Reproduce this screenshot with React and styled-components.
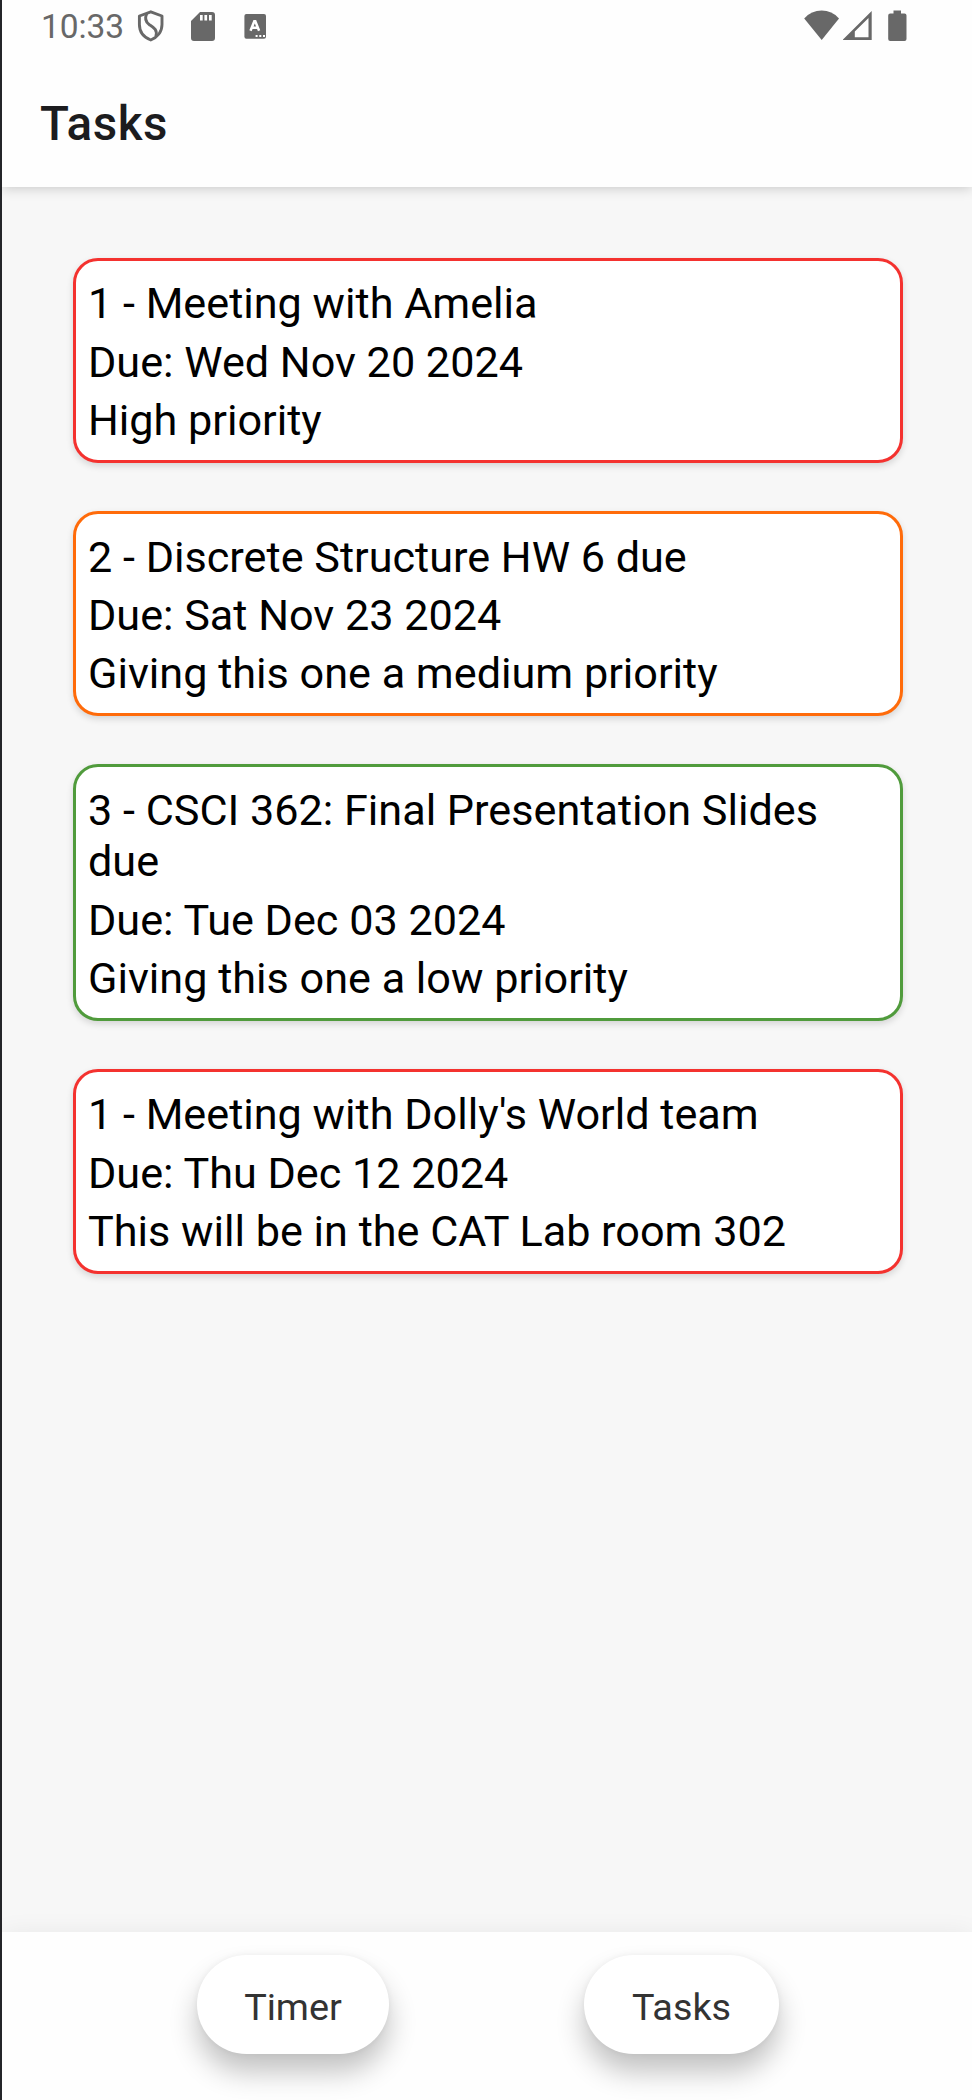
import React from "react";
import styled, { createGlobalStyle } from "styled-components";

const GlobalStyle = createGlobalStyle`
  * { box-sizing: border-box; }
  body { margin: 0; background: #f7f7f7; }
`;

const Screen = styled.div`
  width: 972px;
  height: 2100px;
  display: flex;
  flex-direction: column;
  overflow: hidden;
  background: #f7f7f7;
  border-left: 2px solid #242529;
  font-family: Roboto, "Liberation Sans", sans-serif;
`;

const Header = styled.header`
  flex: none;
  height: 187px;
  background: #fefefe;
  box-shadow: 0 1px 12px rgba(0, 0, 0, 0.2);
`;

const StatusBar = styled.div`
  height: 53px;
  padding: 0 65px 0 39px;
  display: flex;
  justify-content: space-between;
  color: #686868;
`;

const StatusGroup = styled.div`
  display: flex;
  align-items: flex-start;
`;

const Clock = styled.span`
  width: 96px;
  padding-top: 6px;
  font-size: 33.5px;
  line-height: 41px;
  letter-spacing: -0.1px;
  white-space: nowrap;
`;

const Glyph = styled.svg`
  display: block;
  flex: none;
  margin-top: 9px;
  margin-left: ${(p) => p.$gap || 0}px;
`;

const Title = styled.h1`
  margin: 0;
  padding: 42px 0 0 38px;
  font-size: 47.5px;
  line-height: 58px;
  font-weight: 500;
  letter-spacing: 0.6px;
  color: #1c1c1e;
`;

const TaskList = styled.main`
  flex: 1;
  padding: 71px 69px 0 71px;
  display: flex;
  flex-direction: column;
  gap: 48px;
`;

const TaskCard = styled.article`
  padding: 17.4px 11px 13.6px 12px;
  display: flex;
  flex-direction: column;
  gap: 7px;
  background: #fff;
  border: 3px solid ${(p) => p.$color};
  border-radius: 25px;
  box-shadow: 0 3px 7px rgba(0, 0, 0, 0.14);
`;

const Line = styled.p`
  margin: 0;
  font-size: 43.2px;
  line-height: 51.4px;
  color: #000;
`;

const BottomBar = styled.nav`
  flex: none;
  height: 168px;
  padding: 23px 0 0 195px;
  display: flex;
  gap: 195px;
  background: #fefefe;
  box-shadow: 0 2px 24px rgba(0, 0, 0, 0.07);
`;

const NavButton = styled.button`
  width: ${(p) => p.$width}px;
  height: 99px;
  padding: 5px 0 0;
  border: 0;
  border-radius: 50px;
  background: #fff;
  color: #333;
  font: 400 37.8px/46px Roboto, "Liberation Sans", sans-serif;
  box-shadow: 0 18px 28px rgba(0, 0, 0, 0.24), 0 0 6px rgba(0, 0, 0, 0.05);
`;

const tasks = [
  { color: "#f4322f", lines: ["1 - Meeting with Amelia", "Due: Wed Nov 20 2024", "High priority"] },
  { color: "#ff6b0a", lines: ["2 - Discrete Structure HW 6 due", "Due: Sat Nov 23 2024", "Giving this one a medium priority"] },
  { color: "#509b3c", lines: ["3 - CSCI 362: Final Presentation Slides due", "Due: Tue Dec 03 2024", "Giving this one a low priority"] },
  { color: "#f4322f", lines: ["1 - Meeting with Dolly's World team", "Due: Thu Dec 12 2024", "This will be in the CAT Lab room 302"] },
];

const ShieldIcon = () => (
  <Glyph width="27" height="34" viewBox="0 0 27 34" fill="none" stroke="currentColor" strokeWidth="2.9">
    <path d="M13.8 2.8 L2.4 7 V15.5 C2.4 23 7.2 28.5 13.8 31 C20 28.5 25 23 25 15.5 V7 Z" strokeLinejoin="round" />
    <path d="M9.8 4.5 C7.7 9 8.5 13 12.4 15.7 C17 18.7 20.7 20.8 18.9 27.3" />
  </Glyph>
);

const SdCardIcon = () => (
  <Glyph $gap={27} width="24" height="34" viewBox="0 0 24 34" fill="currentColor">
    <path fillRule="evenodd" d="M9 3 H21 Q24 3 24 6 V29 Q24 32 21 32 H3 Q0 32 0 29 V12 Z M9 6 V11.5 H11.7 V6 Z M13.4 6 V11.5 H16.1 V6 Z M18 6 V11.5 H20.7 V6 Z" />
  </Glyph>
);

const KeyboardIcon = () => (
  <Glyph $gap={29} width="23" height="34" viewBox="0 0 23 34">
    <rect x="0.4" y="5" width="21.6" height="24.7" rx="2" fill="currentColor" />
    <path d="M6.5 21.8 L10.3 12.3 H11.3 L15.1 21.8 M8 18.7 H13.6" fill="none" stroke="#fff" strokeWidth="2.5" />
    <path d="M11.6 26 h2 v2 h-2z M15.3 26 h2 v2 h-2z M19 26 h2 v2 h-2z" fill="#fff" />
  </Glyph>
);

const WifiIcon = () => (
  <Glyph width="36" height="34" viewBox="0 0 36 34" fill="currentColor">
    <path d="M0.2 9.4 Q7.5 1.6 17.7 1.6 Q27.8 1.6 35 9.4 L17.7 31 Z" />
  </Glyph>
);

const SignalIcon = () => (
  <Glyph $gap={3} width="30" height="34" viewBox="0 0 30 34" fill="currentColor">
    <path fillRule="evenodd" d="M-0.5 31 L28.7 2 V31 Z M11.8 22.5 V28.3 H25.5 V9 Z" />
  </Glyph>
);

const BatteryIcon = () => (
  <Glyph $gap={15} width="19" height="34" viewBox="0 0 19 34" fill="currentColor">
    <path d="M5.5 1.6 H13 V4.6 H16.5 Q18.5 4.6 18.5 6.6 V30 Q18.5 32 16.5 32 H2.2 Q0.2 32 0.2 30 V6.6 Q0.2 4.6 2.2 4.6 H5.5 Z" />
  </Glyph>
);

export default function App() {
  return (
    <>
      <GlobalStyle />
      <Screen>
        <Header>
          <StatusBar>
            <StatusGroup>
              <Clock>10:33</Clock>
              <ShieldIcon />
              <SdCardIcon />
              <KeyboardIcon />
            </StatusGroup>
            <StatusGroup>
              <WifiIcon />
              <SignalIcon />
              <BatteryIcon />
            </StatusGroup>
          </StatusBar>
          <Title>Tasks</Title>
        </Header>
        <TaskList>
          {tasks.map((task) => (
            <TaskCard key={task.lines[0]} $color={task.color}>
              {task.lines.map((line) => (
                <Line key={line}>{line}</Line>
              ))}
            </TaskCard>
          ))}
        </TaskList>
        <BottomBar>
          <NavButton $width={192}>Timer</NavButton>
          <NavButton $width={195}>Tasks</NavButton>
        </BottomBar>
      </Screen>
    </>
  );
}
